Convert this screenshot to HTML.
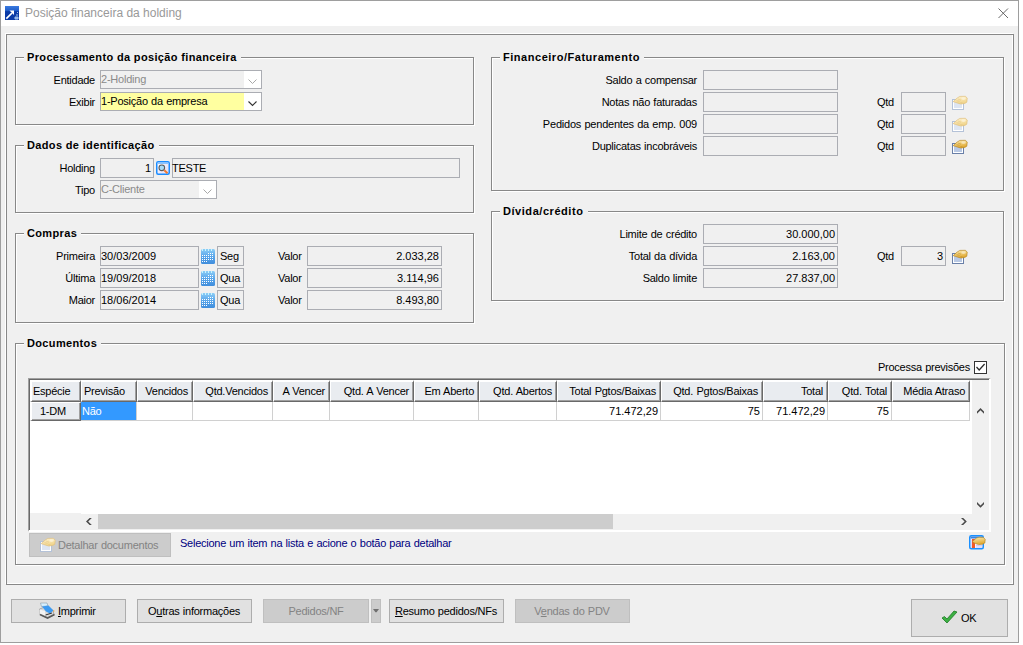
<!DOCTYPE html><html><head><meta charset="utf-8"><style>
html,body{margin:0;padding:0;background:#fff;width:1023px;height:645px;overflow:hidden}
body{position:relative;font-family:'Liberation Sans',sans-serif}
div{position:absolute;box-sizing:border-box}
.t{white-space:nowrap;line-height:13px;font-family:'Liberation Sans',sans-serif}
svg{position:absolute}
</style></head><body>
<div style="left:0px;top:0px;width:1019px;height:643px;border:1px solid #9e9e9e;background:#f0f0f0"></div>
<div style="left:1px;top:1px;width:1017px;height:25px;background:#fff"></div>
<svg style="left:5px;top:6px" width="14" height="14" viewBox="0 0 14 14"><defs><linearGradient id="ig" x1="0" y1="0" x2="0" y2="1"><stop offset="0" stop-color="#3b7be0"/><stop offset="0.35" stop-color="#1f5cc8"/><stop offset="0.4" stop-color="#0a3aa6"/><stop offset="1" stop-color="#0a3aa6"/></linearGradient></defs><rect width="14" height="14" fill="url(#ig)"/><path d="M1.3 12.7 L7 7" stroke="#fff" stroke-width="1.7"/><path d="M4.5 4.5 L9 4.5 L9 9 Z" fill="#fff"/><path d="M10 11h3v2h-3zM12 7l1 -1M11 9h2" stroke="#9fc0ee" stroke-width="1" fill="#7fa6e0"/></svg>
<div class="t" style="left:25px;top:7px;font-size:12px;color:#999">Posição financeira da holding</div>
<svg style="left:998px;top:8px" width="11" height="11" viewBox="0 0 11 11"><path d="M0.5 0.5 L10 10 M10 0.5 L0.5 10" stroke="#5a5a5a" stroke-width="0.9"/></svg>
<div style="left:5px;top:33px;width:1008px;height:551px;border:1px solid #fff"></div>
<div style="left:6px;top:34px;width:1008px;height:551px;border:1px solid #888"></div>
<div style="left:16px;top:58px;width:459px;height:68px;border:1px solid #fff"></div>
<div style="left:15px;top:57px;width:459px;height:68px;border:1px solid #888"></div>
<div style="left:24px;top:55px;width:217px;height:5px;background:#f0f0f0"></div>
<div class="t" style="left:27px;top:51px;font-size:11px;font-weight:bold;color:#000;letter-spacing:0.350px;word-spacing:0px;">Processamento da posição financeira</div>
<div class="t" style="right:928px;top:74px;font-size:11px;font-weight:normal;color:#000;letter-spacing:-0.250px;word-spacing:0.5px;">Entidade</div>
<div class="t" style="right:928px;top:96px;font-size:11px;font-weight:normal;color:#000;letter-spacing:-0.250px;word-spacing:0.5px;">Exibir</div>
<div style="left:100px;top:70px;width:162px;height:19px;border:1px solid #abadb3;background:#f0f0f0"></div>
<div style="left:244px;top:71px;width:17px;height:17px;background:#fff"></div>
<div class="t" style="left:101px;top:73px;font-size:11px;font-weight:normal;color:#8a8a8a;letter-spacing:-0.222px;word-spacing:0.5px;">2-Holding</div>
<svg style="left:248px;top:79px" width="9" height="6" viewBox="0 0 9 6"><path d="M0.5 0.5 L4.5 4.5 L8.5 0.5" stroke="#a8a8a8" fill="none"/></svg>
<div style="left:100px;top:92px;width:162px;height:19px;border:1px solid #abadb3;background:#ffffa0"></div>
<div style="left:244px;top:93px;width:17px;height:17px;background:#fff"></div>
<div class="t" style="left:101px;top:95px;font-size:11px;font-weight:normal;color:#000;letter-spacing:-0.237px;word-spacing:0.5px;">1-Posição da empresa</div>
<svg style="left:248px;top:101px" width="9" height="6" viewBox="0 0 9 6"><path d="M0.5 0.5 L4.5 4.5 L8.5 0.5" stroke="#333" stroke-width="1.1" fill="none"/></svg>
<div style="left:16px;top:146px;width:459px;height:68px;border:1px solid #fff"></div>
<div style="left:15px;top:145px;width:459px;height:68px;border:1px solid #888"></div>
<div style="left:24px;top:143px;width:135px;height:5px;background:#f0f0f0"></div>
<div class="t" style="left:27px;top:139px;font-size:11px;font-weight:bold;color:#000;letter-spacing:0.350px;word-spacing:0px;">Dados de identificação</div>
<div class="t" style="right:928px;top:162px;font-size:11px;font-weight:normal;color:#000;letter-spacing:-0.250px;word-spacing:0.5px;">Holding</div>
<div style="left:100px;top:158px;width:54px;height:20px;border:1px solid #abadb3;background:#f0f0f0"></div>
<div class="t" style="right:872px;top:162px;font-size:11px;font-weight:normal;color:#000;letter-spacing:0.000px;word-spacing:0.5px;">1</div>
<svg style="left:156px;top:161px" width="14" height="14" viewBox="0 0 14 14"><defs><linearGradient id="sg" x1="0" y1="0" x2="1" y2="1"><stop offset="0" stop-color="#ffffff"/><stop offset="1" stop-color="#dcd8f4"/></linearGradient></defs><rect x="0.75" y="0.75" width="12.5" height="12.5" rx="1.5" fill="url(#sg)" stroke="#1a8cff" stroke-width="1.5"/><rect x="1.5" y="1.5" width="11" height="1.5" fill="#8cc4ff"/><circle cx="5.8" cy="6.8" r="2.8" fill="#a8dcf8" stroke="#5a5a5a" stroke-width="1.1"/><path d="M8.3 9.3 L11.5 12.2" stroke="#f07a30" stroke-width="2"/></svg>
<div style="left:172px;top:158px;width:288px;height:20px;border:1px solid #abadb3;background:#f0f0f0"></div>
<div class="t" style="left:172px;top:162px;font-size:11px;font-weight:normal;color:#000;letter-spacing:-0.250px;word-spacing:0.5px;">TESTE</div>
<div class="t" style="right:928px;top:184px;font-size:11px;font-weight:normal;color:#000;letter-spacing:-0.250px;word-spacing:0.5px;">Tipo</div>
<div style="left:100px;top:180px;width:117px;height:19px;border:1px solid #abadb3;background:#f0f0f0"></div>
<div style="left:199px;top:181px;width:17px;height:17px;background:#fff"></div>
<div class="t" style="left:101px;top:183px;font-size:11px;font-weight:normal;color:#8a8a8a;letter-spacing:-0.250px;word-spacing:0.5px;">C-Cliente</div>
<svg style="left:203px;top:189px" width="9" height="6" viewBox="0 0 9 6"><path d="M0.5 0.5 L4.5 4.5 L8.5 0.5" stroke="#a8a8a8" fill="none"/></svg>
<div style="left:16px;top:234px;width:459px;height:90px;border:1px solid #fff"></div>
<div style="left:15px;top:233px;width:459px;height:90px;border:1px solid #888"></div>
<div style="left:24px;top:231px;width:57px;height:5px;background:#f0f0f0"></div>
<div class="t" style="left:27px;top:227px;font-size:11px;font-weight:bold;color:#000;letter-spacing:0.350px;word-spacing:0px;">Compras</div>
<div class="t" style="right:928px;top:250px;font-size:11px;font-weight:normal;color:#000;letter-spacing:-0.250px;word-spacing:0.5px;">Primeira</div>
<div style="left:100px;top:246px;width:99px;height:20px;border:1px solid #abadb3;background:#f0f0f0"></div>
<div class="t" style="left:101px;top:250px;font-size:11px;font-weight:normal;color:#000;letter-spacing:0.000px;word-spacing:0.5px;">30/03/2009</div>
<svg style="left:201px;top:249px" width="14" height="15" viewBox="0 0 14 15"><defs><linearGradient id="cg0" x1="0" y1="0" x2="0" y2="1"><stop offset="0" stop-color="#8ccdf6"/><stop offset="0.5" stop-color="#5aa6ea"/><stop offset="1" stop-color="#3f8ddc"/></linearGradient></defs><rect width="14" height="15" rx="1.5" fill="url(#cg0)"/><path d="M1 0h1v2h-1zM4 0h1v2h-1zM7 0h1v2h-1zM10 0h1v2h-1z" fill="#c8f4ff"/><path d="M1 6h1v1h-1zM3 6h1v1h-1zM5 6h1v1h-1zM7 6h1v1h-1zM9 6h1v1h-1zM11 6h1v1h-1zM1 8h1v1h-1zM3 8h1v1h-1zM5 8h1v1h-1zM7 8h1v1h-1zM9 8h1v1h-1zM11 8h1v1h-1zM1 10h1v1h-1zM3 10h1v1h-1zM5 10h1v1h-1zM7 10h1v1h-1zM9 10h1v1h-1zM11 10h1v1h-1zM7 4h1v1h-1zM9 4h1v1h-1zM11 4h1v1h-1zM1 12h1v1h-1zM3 12h1v1h-1zM5 12h1v1h-1z" fill="#fff"/></svg>
<div style="left:217px;top:246px;width:27px;height:20px;border:1px solid #abadb3;background:#f0f0f0"></div>
<div class="t" style="left:220px;top:250px;font-size:11px;font-weight:normal;color:#000;letter-spacing:-0.250px;word-spacing:0.5px;">Seg</div>
<div class="t" style="left:278px;top:250px;font-size:11px;font-weight:normal;color:#000;letter-spacing:-0.250px;word-spacing:0.5px;">Valor</div>
<div style="left:307px;top:246px;width:135px;height:20px;border:1px solid #abadb3;background:#f0f0f0"></div>
<div class="t" style="right:584px;top:250px;font-size:11px;font-weight:normal;color:#000;letter-spacing:0.000px;word-spacing:0.5px;">2.033,28</div>
<div class="t" style="right:928px;top:272px;font-size:11px;font-weight:normal;color:#000;letter-spacing:-0.250px;word-spacing:0.5px;">Última</div>
<div style="left:100px;top:268px;width:99px;height:20px;border:1px solid #abadb3;background:#f0f0f0"></div>
<div class="t" style="left:101px;top:272px;font-size:11px;font-weight:normal;color:#000;letter-spacing:0.000px;word-spacing:0.5px;">19/09/2018</div>
<svg style="left:201px;top:271px" width="14" height="15" viewBox="0 0 14 15"><defs><linearGradient id="cg1" x1="0" y1="0" x2="0" y2="1"><stop offset="0" stop-color="#8ccdf6"/><stop offset="0.5" stop-color="#5aa6ea"/><stop offset="1" stop-color="#3f8ddc"/></linearGradient></defs><rect width="14" height="15" rx="1.5" fill="url(#cg1)"/><path d="M1 0h1v2h-1zM4 0h1v2h-1zM7 0h1v2h-1zM10 0h1v2h-1z" fill="#c8f4ff"/><path d="M1 6h1v1h-1zM3 6h1v1h-1zM5 6h1v1h-1zM7 6h1v1h-1zM9 6h1v1h-1zM11 6h1v1h-1zM1 8h1v1h-1zM3 8h1v1h-1zM5 8h1v1h-1zM7 8h1v1h-1zM9 8h1v1h-1zM11 8h1v1h-1zM1 10h1v1h-1zM3 10h1v1h-1zM5 10h1v1h-1zM7 10h1v1h-1zM9 10h1v1h-1zM11 10h1v1h-1zM7 4h1v1h-1zM9 4h1v1h-1zM11 4h1v1h-1zM1 12h1v1h-1zM3 12h1v1h-1zM5 12h1v1h-1z" fill="#fff"/></svg>
<div style="left:217px;top:268px;width:27px;height:20px;border:1px solid #abadb3;background:#f0f0f0"></div>
<div class="t" style="left:220px;top:272px;font-size:11px;font-weight:normal;color:#000;letter-spacing:-0.250px;word-spacing:0.5px;">Qua</div>
<div class="t" style="left:278px;top:272px;font-size:11px;font-weight:normal;color:#000;letter-spacing:-0.250px;word-spacing:0.5px;">Valor</div>
<div style="left:307px;top:268px;width:135px;height:20px;border:1px solid #abadb3;background:#f0f0f0"></div>
<div class="t" style="right:584px;top:272px;font-size:11px;font-weight:normal;color:#000;letter-spacing:0.000px;word-spacing:0.5px;">3.114,96</div>
<div class="t" style="right:928px;top:294px;font-size:11px;font-weight:normal;color:#000;letter-spacing:-0.250px;word-spacing:0.5px;">Maior</div>
<div style="left:100px;top:290px;width:99px;height:20px;border:1px solid #abadb3;background:#f0f0f0"></div>
<div class="t" style="left:101px;top:294px;font-size:11px;font-weight:normal;color:#000;letter-spacing:0.000px;word-spacing:0.5px;">18/06/2014</div>
<svg style="left:201px;top:293px" width="14" height="15" viewBox="0 0 14 15"><defs><linearGradient id="cg2" x1="0" y1="0" x2="0" y2="1"><stop offset="0" stop-color="#8ccdf6"/><stop offset="0.5" stop-color="#5aa6ea"/><stop offset="1" stop-color="#3f8ddc"/></linearGradient></defs><rect width="14" height="15" rx="1.5" fill="url(#cg2)"/><path d="M1 0h1v2h-1zM4 0h1v2h-1zM7 0h1v2h-1zM10 0h1v2h-1z" fill="#c8f4ff"/><path d="M1 6h1v1h-1zM3 6h1v1h-1zM5 6h1v1h-1zM7 6h1v1h-1zM9 6h1v1h-1zM11 6h1v1h-1zM1 8h1v1h-1zM3 8h1v1h-1zM5 8h1v1h-1zM7 8h1v1h-1zM9 8h1v1h-1zM11 8h1v1h-1zM1 10h1v1h-1zM3 10h1v1h-1zM5 10h1v1h-1zM7 10h1v1h-1zM9 10h1v1h-1zM11 10h1v1h-1zM7 4h1v1h-1zM9 4h1v1h-1zM11 4h1v1h-1zM1 12h1v1h-1zM3 12h1v1h-1zM5 12h1v1h-1z" fill="#fff"/></svg>
<div style="left:217px;top:290px;width:27px;height:20px;border:1px solid #abadb3;background:#f0f0f0"></div>
<div class="t" style="left:220px;top:294px;font-size:11px;font-weight:normal;color:#000;letter-spacing:-0.250px;word-spacing:0.5px;">Qua</div>
<div class="t" style="left:278px;top:294px;font-size:11px;font-weight:normal;color:#000;letter-spacing:-0.250px;word-spacing:0.5px;">Valor</div>
<div style="left:307px;top:290px;width:135px;height:20px;border:1px solid #abadb3;background:#f0f0f0"></div>
<div class="t" style="right:584px;top:294px;font-size:11px;font-weight:normal;color:#000;letter-spacing:0.000px;word-spacing:0.5px;">8.493,80</div>
<div style="left:492px;top:58px;width:513px;height:134px;border:1px solid #fff"></div>
<div style="left:491px;top:57px;width:513px;height:134px;border:1px solid #888"></div>
<div style="left:500px;top:55px;width:144px;height:5px;background:#f0f0f0"></div>
<div class="t" style="left:503px;top:51px;font-size:11px;font-weight:bold;color:#000;letter-spacing:0.530px;word-spacing:0px;">Financeiro/Faturamento</div>
<div class="t" style="right:326px;top:74px;font-size:11px;font-weight:normal;color:#000;letter-spacing:-0.250px;word-spacing:0.5px;">Saldo a compensar</div>
<div style="left:703px;top:70px;width:135px;height:20px;border:1px solid #abadb3;background:#f0f0f0"></div>
<div class="t" style="right:326px;top:96px;font-size:11px;font-weight:normal;color:#000;letter-spacing:-0.250px;word-spacing:0.5px;">Notas não faturadas</div>
<div style="left:703px;top:92px;width:135px;height:20px;border:1px solid #abadb3;background:#f0f0f0"></div>
<div class="t" style="left:877px;top:96px;font-size:11px;font-weight:normal;color:#000;letter-spacing:-0.250px;word-spacing:0.5px;">Qtd</div>
<div style="left:901px;top:92px;width:45px;height:20px;border:1px solid #abadb3;background:#f0f0f0"></div>
<svg style="left:952px;top:95px" width="17" height="16" viewBox="0 0 17 16"><defs><linearGradient id="hg1" x1="0" y1="0" x2="0.3" y2="1"><stop offset="0" stop-color="#fff3d0"/><stop offset="1" stop-color="#f0d48a"/></linearGradient></defs><rect x="0.5" y="4.5" width="11" height="10" fill="#dde5f2" stroke="#b4c2d8"/><rect x="1.5" y="5.5" width="9" height="8" fill="none" stroke="#fff" stroke-width="1"/><path d="M1.2 6.6 L5 3.2 L7.8 1.4 L13.5 1.3 L15.2 3.2 L14.8 7.2 L12.8 8.4 L8.8 9 L6 8.2 L3.2 7.3 Z" fill="url(#hg1)" stroke="#e0c080" stroke-width="0.7"/><path d="M4.5 5.6 L7.5 6.4 M6.2 4.2 L9 5.2 M8.5 7.5 L10.5 8" stroke="#e0c080" stroke-width="0.6" opacity="0.8"/><ellipse cx="11.5" cy="3.6" rx="2.2" ry="1.3" fill="#fff" opacity="0.45"/></svg>
<div class="t" style="right:326px;top:118px;font-size:11px;font-weight:normal;color:#000;letter-spacing:-0.216px;word-spacing:0.5px;">Pedidos pendentes da emp. 009</div>
<div style="left:703px;top:114px;width:135px;height:20px;border:1px solid #abadb3;background:#f0f0f0"></div>
<div class="t" style="left:877px;top:118px;font-size:11px;font-weight:normal;color:#000;letter-spacing:-0.250px;word-spacing:0.5px;">Qtd</div>
<div style="left:901px;top:114px;width:45px;height:20px;border:1px solid #abadb3;background:#f0f0f0"></div>
<svg style="left:952px;top:117px" width="17" height="16" viewBox="0 0 17 16"><defs><linearGradient id="hg2" x1="0" y1="0" x2="0.3" y2="1"><stop offset="0" stop-color="#fff3d0"/><stop offset="1" stop-color="#f0d48a"/></linearGradient></defs><rect x="0.5" y="4.5" width="11" height="10" fill="#dde5f2" stroke="#b4c2d8"/><rect x="1.5" y="5.5" width="9" height="8" fill="none" stroke="#fff" stroke-width="1"/><path d="M1.2 6.6 L5 3.2 L7.8 1.4 L13.5 1.3 L15.2 3.2 L14.8 7.2 L12.8 8.4 L8.8 9 L6 8.2 L3.2 7.3 Z" fill="url(#hg2)" stroke="#e0c080" stroke-width="0.7"/><path d="M4.5 5.6 L7.5 6.4 M6.2 4.2 L9 5.2 M8.5 7.5 L10.5 8" stroke="#e0c080" stroke-width="0.6" opacity="0.8"/><ellipse cx="11.5" cy="3.6" rx="2.2" ry="1.3" fill="#fff" opacity="0.45"/></svg>
<div class="t" style="right:326px;top:140px;font-size:11px;font-weight:normal;color:#000;letter-spacing:-0.250px;word-spacing:0.5px;">Duplicatas incobráveis</div>
<div style="left:703px;top:136px;width:135px;height:20px;border:1px solid #abadb3;background:#f0f0f0"></div>
<div class="t" style="left:877px;top:140px;font-size:11px;font-weight:normal;color:#000;letter-spacing:-0.250px;word-spacing:0.5px;">Qtd</div>
<div style="left:901px;top:136px;width:45px;height:20px;border:1px solid #abadb3;background:#f0f0f0"></div>
<svg style="left:952px;top:139px" width="17" height="16" viewBox="0 0 17 16"><defs><linearGradient id="hg3" x1="0" y1="0" x2="0.3" y2="1"><stop offset="0" stop-color="#fff0b8"/><stop offset="1" stop-color="#e0a830"/></linearGradient></defs><rect x="0.5" y="4.5" width="11" height="10" fill="#b9c9e4" stroke="#6a80a8"/><rect x="1.5" y="5.5" width="9" height="8" fill="none" stroke="#fff" stroke-width="1"/><path d="M1.2 6.6 L5 3.2 L7.8 1.4 L13.5 1.3 L15.2 3.2 L14.8 7.2 L12.8 8.4 L8.8 9 L6 8.2 L3.2 7.3 Z" fill="url(#hg3)" stroke="#b88a2a" stroke-width="0.7"/><path d="M4.5 5.6 L7.5 6.4 M6.2 4.2 L9 5.2 M8.5 7.5 L10.5 8" stroke="#b88a2a" stroke-width="0.6" opacity="0.8"/><ellipse cx="11.5" cy="3.6" rx="2.2" ry="1.3" fill="#fff" opacity="0.45"/></svg>
<div style="left:492px;top:212px;width:513px;height:90px;border:1px solid #fff"></div>
<div style="left:491px;top:211px;width:513px;height:90px;border:1px solid #888"></div>
<div style="left:500px;top:209px;width:88px;height:5px;background:#f0f0f0"></div>
<div class="t" style="left:503px;top:205px;font-size:11px;font-weight:bold;color:#000;letter-spacing:0.550px;word-spacing:0px;">Dívida/crédito</div>
<div class="t" style="right:326px;top:228px;font-size:11px;font-weight:normal;color:#000;letter-spacing:-0.250px;word-spacing:0.5px;">Limite de crédito</div>
<div style="left:703px;top:224px;width:135px;height:20px;border:1px solid #abadb3;background:#f0f0f0"></div>
<div class="t" style="right:188px;top:228px;font-size:11px;font-weight:normal;color:#000;letter-spacing:0.000px;word-spacing:0.5px;">30.000,00</div>
<div class="t" style="right:326px;top:250px;font-size:11px;font-weight:normal;color:#000;letter-spacing:-0.250px;word-spacing:0.5px;">Total da dívida</div>
<div style="left:703px;top:246px;width:135px;height:20px;border:1px solid #abadb3;background:#f0f0f0"></div>
<div class="t" style="right:188px;top:250px;font-size:11px;font-weight:normal;color:#000;letter-spacing:0.000px;word-spacing:0.5px;">2.163,00</div>
<div class="t" style="right:326px;top:272px;font-size:11px;font-weight:normal;color:#000;letter-spacing:-0.250px;word-spacing:0.5px;">Saldo limite</div>
<div style="left:703px;top:268px;width:135px;height:20px;border:1px solid #abadb3;background:#f0f0f0"></div>
<div class="t" style="right:188px;top:272px;font-size:11px;font-weight:normal;color:#000;letter-spacing:0.000px;word-spacing:0.5px;">27.837,00</div>
<div class="t" style="left:877px;top:250px;font-size:11px;font-weight:normal;color:#000;letter-spacing:-0.250px;word-spacing:0.5px;">Qtd</div>
<div style="left:901px;top:246px;width:45px;height:20px;border:1px solid #abadb3;background:#f0f0f0"></div>
<div class="t" style="right:80px;top:250px;font-size:11px;font-weight:normal;color:#000;letter-spacing:0.000px;word-spacing:0.5px;">3</div>
<svg style="left:952px;top:249px" width="17" height="16" viewBox="0 0 17 16"><defs><linearGradient id="hg4" x1="0" y1="0" x2="0.3" y2="1"><stop offset="0" stop-color="#fff0b8"/><stop offset="1" stop-color="#e0a830"/></linearGradient></defs><rect x="0.5" y="4.5" width="11" height="10" fill="#b9c9e4" stroke="#6a80a8"/><rect x="1.5" y="5.5" width="9" height="8" fill="none" stroke="#fff" stroke-width="1"/><path d="M1.2 6.6 L5 3.2 L7.8 1.4 L13.5 1.3 L15.2 3.2 L14.8 7.2 L12.8 8.4 L8.8 9 L6 8.2 L3.2 7.3 Z" fill="url(#hg4)" stroke="#b88a2a" stroke-width="0.7"/><path d="M4.5 5.6 L7.5 6.4 M6.2 4.2 L9 5.2 M8.5 7.5 L10.5 8" stroke="#b88a2a" stroke-width="0.6" opacity="0.8"/><ellipse cx="11.5" cy="3.6" rx="2.2" ry="1.3" fill="#fff" opacity="0.45"/></svg>
<div style="left:16px;top:344px;width:990px;height:222px;border:1px solid #fff"></div>
<div style="left:15px;top:343px;width:990px;height:222px;border:1px solid #888"></div>
<div style="left:24px;top:341px;width:77px;height:5px;background:#f0f0f0"></div>
<div class="t" style="left:27px;top:337px;font-size:11px;font-weight:bold;color:#000;letter-spacing:0.350px;word-spacing:0px;">Documentos</div>
<div class="t" style="right:53px;top:361px;font-size:11px;font-weight:normal;color:#000;letter-spacing:-0.250px;word-spacing:0.5px;">Processa previsões</div>
<div style="left:974px;top:361px;width:13px;height:13px;border:1px solid #333;background:#fff"></div>
<svg style="left:975px;top:362px" width="11" height="11" viewBox="0 0 11 11"><path d="M1.5 5 L4.2 8 L9.6 2" stroke="#2a2a2a" stroke-width="1.25" fill="none"/></svg>
<div style="left:28px;top:378px;width:963px;height:154px;border-top:1px solid #a0a0a0;border-left:1px solid #a0a0a0;border-right:2px solid #fff;border-bottom:2px solid #fff;background:#fff;box-shadow:inset 1px 1px 0 #696969"></div>
<div style="left:30px;top:380px;width:51px;height:22px;background:#e9ecf0;border-top:2px solid #fff;border-left:2px solid #fff;border-right:1px solid #696969;border-bottom:1px solid #696969;box-shadow:inset -1px -1px 0 #a0a0a0"></div>
<div class="t" style="left:33px;top:385px;font-size:11px;font-weight:normal;color:#000;letter-spacing:-0.250px;word-spacing:0.5px;">Espécie</div>
<div style="left:81px;top:380px;width:56px;height:22px;background:#e9ecf0;border-top:2px solid #fff;border-left:1px solid #fff;border-right:1px solid #696969;border-bottom:1px solid #696969;box-shadow:inset -1px -1px 0 #a0a0a0"></div>
<div class="t" style="left:84px;top:385px;font-size:11px;font-weight:normal;color:#000;letter-spacing:-0.250px;word-spacing:0.5px;">Previsão</div>
<div style="left:137px;top:380px;width:56px;height:22px;background:#e9ecf0;border-top:2px solid #fff;border-left:1px solid #fff;border-right:1px solid #696969;border-bottom:1px solid #696969;box-shadow:inset -1px -1px 0 #a0a0a0"></div>
<div class="t" style="right:835px;top:385px;font-size:11px;font-weight:normal;color:#000;letter-spacing:-0.250px;word-spacing:0.5px;">Vencidos</div>
<div style="left:193px;top:380px;width:80px;height:22px;background:#e9ecf0;border-top:2px solid #fff;border-left:1px solid #fff;border-right:1px solid #696969;border-bottom:1px solid #696969;box-shadow:inset -1px -1px 0 #a0a0a0"></div>
<div class="t" style="right:755px;top:385px;font-size:11px;font-weight:normal;color:#000;letter-spacing:-0.229px;word-spacing:0.5px;">Qtd.Vencidos</div>
<div style="left:273px;top:380px;width:57px;height:22px;background:#e9ecf0;border-top:2px solid #fff;border-left:1px solid #fff;border-right:1px solid #696969;border-bottom:1px solid #696969;box-shadow:inset -1px -1px 0 #a0a0a0"></div>
<div class="t" style="right:698px;top:385px;font-size:11px;font-weight:normal;color:#000;letter-spacing:-0.250px;word-spacing:0.5px;">A Vencer</div>
<div style="left:330px;top:380px;width:84px;height:22px;background:#e9ecf0;border-top:2px solid #fff;border-left:1px solid #fff;border-right:1px solid #696969;border-bottom:1px solid #696969;box-shadow:inset -1px -1px 0 #a0a0a0"></div>
<div class="t" style="right:614px;top:385px;font-size:11px;font-weight:normal;color:#000;letter-spacing:-0.231px;word-spacing:0.5px;">Qtd. A Vencer</div>
<div style="left:414px;top:380px;width:65px;height:22px;background:#e9ecf0;border-top:2px solid #fff;border-left:1px solid #fff;border-right:1px solid #696969;border-bottom:1px solid #696969;box-shadow:inset -1px -1px 0 #a0a0a0"></div>
<div class="t" style="right:549px;top:385px;font-size:11px;font-weight:normal;color:#000;letter-spacing:-0.250px;word-spacing:0.5px;">Em Aberto</div>
<div style="left:479px;top:380px;width:78px;height:22px;background:#e9ecf0;border-top:2px solid #fff;border-left:1px solid #fff;border-right:1px solid #696969;border-bottom:1px solid #696969;box-shadow:inset -1px -1px 0 #a0a0a0"></div>
<div class="t" style="right:471px;top:385px;font-size:11px;font-weight:normal;color:#000;letter-spacing:-0.229px;word-spacing:0.5px;">Qtd. Abertos</div>
<div style="left:557px;top:380px;width:104px;height:22px;background:#e9ecf0;border-top:2px solid #fff;border-left:1px solid #fff;border-right:1px solid #696969;border-bottom:1px solid #696969;box-shadow:inset -1px -1px 0 #a0a0a0"></div>
<div class="t" style="right:367px;top:385px;font-size:11px;font-weight:normal;color:#000;letter-spacing:-0.236px;word-spacing:0.5px;">Total Pgtos/Baixas</div>
<div style="left:661px;top:380px;width:102px;height:22px;background:#e9ecf0;border-top:2px solid #fff;border-left:1px solid #fff;border-right:1px solid #696969;border-bottom:1px solid #696969;box-shadow:inset -1px -1px 0 #a0a0a0"></div>
<div class="t" style="right:265px;top:385px;font-size:11px;font-weight:normal;color:#000;letter-spacing:-0.221px;word-spacing:0.5px;">Qtd. Pgtos/Baixas</div>
<div style="left:763px;top:380px;width:65px;height:22px;background:#e9ecf0;border-top:2px solid #fff;border-left:1px solid #fff;border-right:1px solid #696969;border-bottom:1px solid #696969;box-shadow:inset -1px -1px 0 #a0a0a0"></div>
<div class="t" style="right:200px;top:385px;font-size:11px;font-weight:normal;color:#000;letter-spacing:-0.250px;word-spacing:0.5px;">Total</div>
<div style="left:828px;top:380px;width:64px;height:22px;background:#e9ecf0;border-top:2px solid #fff;border-left:1px solid #fff;border-right:1px solid #696969;border-bottom:1px solid #696969;box-shadow:inset -1px -1px 0 #a0a0a0"></div>
<div class="t" style="right:136px;top:385px;font-size:11px;font-weight:normal;color:#000;letter-spacing:-0.225px;word-spacing:0.5px;">Qtd. Total</div>
<div style="left:892px;top:380px;width:78px;height:22px;background:#e9ecf0;border-top:2px solid #fff;border-left:1px solid #fff;border-right:1px solid #696969;border-bottom:1px solid #696969;box-shadow:inset -1px -1px 0 #a0a0a0"></div>
<div class="t" style="right:58px;top:385px;font-size:11px;font-weight:normal;color:#000;letter-spacing:-0.250px;word-spacing:0.5px;">Média Atraso</div>
<div style="left:30px;top:402px;width:51px;height:19px;background:#e9ecf0;border-top:1px solid #fff;border-left:2px solid #fff;border-right:1px solid #696969;border-bottom:1px solid #696969;box-shadow:inset -1px -1px 0 #a0a0a0"></div>
<div class="t" style="left:-97px;width:300px;text-align:center;top:405px;font-size:11px;font-weight:normal;color:#000;letter-spacing:-0.188px;word-spacing:0.5px;">1-DM</div>
<div style="left:81px;top:402px;width:55px;height:18px;background:#3399ff"></div>
<div style="left:136px;top:402px;width:1px;height:19px;background:#d0d0d0"></div>
<div style="left:81px;top:420px;width:56px;height:1px;background:#d0d0d0"></div>
<div class="t" style="left:82px;top:405px;font-size:11px;font-weight:normal;color:#fff;letter-spacing:-0.250px;word-spacing:0.5px;">Não</div>
<div style="left:137px;top:402px;width:56px;height:19px;border-right:1px solid #d0d0d0;border-bottom:1px solid #d0d0d0"></div>
<div style="left:193px;top:402px;width:80px;height:19px;border-right:1px solid #d0d0d0;border-bottom:1px solid #d0d0d0"></div>
<div style="left:273px;top:402px;width:57px;height:19px;border-right:1px solid #d0d0d0;border-bottom:1px solid #d0d0d0"></div>
<div style="left:330px;top:402px;width:84px;height:19px;border-right:1px solid #d0d0d0;border-bottom:1px solid #d0d0d0"></div>
<div style="left:414px;top:402px;width:65px;height:19px;border-right:1px solid #d0d0d0;border-bottom:1px solid #d0d0d0"></div>
<div style="left:479px;top:402px;width:78px;height:19px;border-right:1px solid #d0d0d0;border-bottom:1px solid #d0d0d0"></div>
<div style="left:557px;top:402px;width:104px;height:19px;border-right:1px solid #d0d0d0;border-bottom:1px solid #d0d0d0"></div>
<div style="left:661px;top:402px;width:102px;height:19px;border-right:1px solid #d0d0d0;border-bottom:1px solid #d0d0d0"></div>
<div style="left:763px;top:402px;width:65px;height:19px;border-right:1px solid #d0d0d0;border-bottom:1px solid #d0d0d0"></div>
<div style="left:828px;top:402px;width:64px;height:19px;border-right:1px solid #d0d0d0;border-bottom:1px solid #d0d0d0"></div>
<div style="left:892px;top:402px;width:78px;height:19px;border-right:1px solid #d0d0d0;border-bottom:1px solid #d0d0d0"></div>
<div class="t" style="right:365px;top:405px;font-size:11px;font-weight:normal;color:#000;letter-spacing:0.000px;word-spacing:0.5px;">71.472,29</div>
<div class="t" style="right:263px;top:405px;font-size:11px;font-weight:normal;color:#000;letter-spacing:0.000px;word-spacing:0.5px;">75</div>
<div class="t" style="right:198px;top:405px;font-size:11px;font-weight:normal;color:#000;letter-spacing:0.000px;word-spacing:0.5px;">71.472,29</div>
<div class="t" style="right:134px;top:405px;font-size:11px;font-weight:normal;color:#000;letter-spacing:0.000px;word-spacing:0.5px;">75</div>
<div style="left:972px;top:380px;width:17px;height:134px;background:#f0f0f0"></div>
<svg style="left:977px;top:407px" width="8" height="8" viewBox="0 0 8 8"><path d="M0 4.6 L3.5 1 L7 4.6 L7 6.8 L3.5 3.2 L0 6.8 Z" fill="#4a4a4a"/></svg>
<svg style="left:977px;top:502px" width="8" height="8" viewBox="0 0 8 8"><path d="M0 0 L3.5 3.6 L7 0 L7 2.2 L3.5 5.8 L0 2.2 Z" fill="#4a4a4a"/></svg>
<div style="left:30px;top:514px;width:959px;height:16px;background:#f0f0f0"></div>
<div style="left:30px;top:513px;width:51px;height:1px;background:#f0f0f0"></div>
<div style="left:98px;top:514px;width:515px;height:15px;background:#cdcdcd"></div>
<svg style="left:85px;top:518px" width="8" height="8" viewBox="0 0 8 8"><path d="M4.6 0 L1 3.5 L4.6 7 L6.8 7 L3.2 3.5 L6.8 0 Z" fill="#4a4a4a"/></svg>
<svg style="left:960px;top:518px" width="8" height="8" viewBox="0 0 8 8"><path d="M1 0 L4.6 3.5 L1 7 L3.2 7 L6.8 3.5 L3.2 0 Z" fill="#4a4a4a"/></svg>
<div style="left:29px;top:533px;width:142px;height:24px;background:#cccccc;border:1px solid #bfbfbf"></div>
<svg style="left:40px;top:537px" width="17" height="16" viewBox="0 0 17 16"><defs><linearGradient id="hg5" x1="0" y1="0" x2="0.3" y2="1"><stop offset="0" stop-color="#fff3d0"/><stop offset="1" stop-color="#f0d48a"/></linearGradient></defs><rect x="0.5" y="4.5" width="11" height="10" fill="#dde5f2" stroke="#b4c2d8"/><rect x="1.5" y="5.5" width="9" height="8" fill="none" stroke="#fff" stroke-width="1"/><path d="M1.2 6.6 L5 3.2 L7.8 1.4 L13.5 1.3 L15.2 3.2 L14.8 7.2 L12.8 8.4 L8.8 9 L6 8.2 L3.2 7.3 Z" fill="url(#hg5)" stroke="#e0c080" stroke-width="0.7"/><path d="M4.5 5.6 L7.5 6.4 M6.2 4.2 L9 5.2 M8.5 7.5 L10.5 8" stroke="#e0c080" stroke-width="0.6" opacity="0.8"/><ellipse cx="11.5" cy="3.6" rx="2.2" ry="1.3" fill="#fff" opacity="0.45"/></svg>
<div class="t" style="left:58px;top:539px;font-size:11px;font-weight:normal;color:#838383;letter-spacing:-0.250px;word-spacing:0.5px;">Detalhar documentos</div>
<div class="t" style="left:180px;top:537px;font-size:11px;font-weight:normal;color:#000080;letter-spacing:-0.250px;word-spacing:0.5px;">Selecione um item na lista e acione o botão para detalhar</div>
<svg style="left:969px;top:535px" width="17" height="15" viewBox="0 0 17 15"><defs><linearGradient id="gg" x1="0" y1="0" x2="0.3" y2="1"><stop offset="0" stop-color="#fff0b8"/><stop offset="1" stop-color="#e0a830"/></linearGradient></defs><rect x="0.75" y="0.75" width="13.5" height="13" rx="1.5" fill="#f4f0ff" stroke="#1a90ff" stroke-width="1.5"/><rect x="1.5" y="1.5" width="12" height="2" fill="#3a86e0"/><rect x="3" y="4" width="3" height="9" fill="#f05a28"/><path d="M7 10.5h6M7 12h6M2 6h1M2 8h1M2 10h1M2 12h1" stroke="#c8c0ee" stroke-width="0.8"/><path d="M3.5 6.5 L7.5 3 L10 2.2 L14.5 2.4 L16.2 4.5 L15.8 8 L13.5 9.2 L9.5 9.6 L6.5 8.5 L4.5 7.6 Z" fill="url(#gg)" stroke="#b88a2a" stroke-width="0.7"/></svg>
<div style="left:11px;top:599px;width:115px;height:24px;background:#e1e1e1;border:1px solid #adadad"></div>
<div class="t" style="left:58px;top:605px;font-size:11px;font-weight:normal;color:#000;letter-spacing:-0.250px;word-spacing:0.5px;"><u>I</u>mprimir</div>
<svg style="left:38px;top:602px" width="18" height="17" viewBox="0 0 18 17"><path d="M1.5 7 L7 5 L15 8.5 L16 13 L10 16 L1.5 12.5 Z" fill="#d8d8d8" stroke="#9a9a9a" stroke-width="0.8"/><path d="M1.5 7.5 L7 9 L7.5 14.5 L1.5 12.5 Z" fill="#f4f4f4"/><path d="M2.5 1 L9 1 L10 4 L3.5 4.5 Z" fill="#d6f0ff" stroke="#8a9aa8" stroke-width="0.6"/><path d="M4 4.5 L10.5 3.5 L15.5 8.5 L12 11.5 L8 9.5 Z" fill="#3d9af0"/><path d="M16 9.5 L15.5 8.5" stroke="#f0a030" stroke-width="1.2"/><path d="M2 12.5 L9.5 16 L16.5 12.5" stroke="#5a5a5a" stroke-width="1.6" fill="none"/><path d="M7.5 13 L14 11" stroke="#333" stroke-width="1"/></svg>
<div style="left:137px;top:599px;width:115px;height:24px;background:#e1e1e1;border:1px solid #adadad"></div>
<div class="t" style="left:44px;width:300px;text-align:center;top:605px;font-size:11px;font-weight:normal;color:#000;letter-spacing:-0.250px;word-spacing:0.5px;">O<u>u</u>tras informações</div>
<div style="left:263px;top:599px;width:106px;height:24px;background:#cccccc;border:1px solid #bfbfbf"></div>
<div class="t" style="left:166px;width:300px;text-align:center;top:605px;font-size:11px;font-weight:normal;color:#838383;letter-spacing:-0.225px;word-spacing:0.5px;">Pedidos/NF</div>
<div style="left:371px;top:599px;width:10px;height:24px;background:#cccccc;border:1px solid #bfbfbf"></div>
<svg style="left:373px;top:609px" width="6" height="4" viewBox="0 0 6 4"><path d="M0 0 L6 0 L3.6 3.2 L2.4 3.2 Z" fill="#707070"/></svg>
<div style="left:389px;top:599px;width:115px;height:24px;background:#e1e1e1;border:1px solid #adadad"></div>
<div class="t" style="left:296px;width:300px;text-align:center;top:605px;font-size:11px;font-weight:normal;color:#000;letter-spacing:-0.236px;word-spacing:0.5px;"><u>R</u>esumo pedidos/NFs</div>
<div style="left:515px;top:599px;width:115px;height:24px;background:#cccccc;border:1px solid #bfbfbf"></div>
<div class="t" style="left:422px;width:300px;text-align:center;top:605px;font-size:11px;font-weight:normal;color:#838383;letter-spacing:-0.250px;word-spacing:0.5px;">V<u>e</u>ndas do PDV</div>
<div style="left:911px;top:599px;width:97px;height:38px;background:#e1e1e1;border:1px solid #adadad"></div>
<svg style="left:941px;top:610px" width="17" height="15" viewBox="0 0 17 15"><path d="M1 8 L6 13 L16 2 L13 1 L6 9 L3.5 6.5 Z" fill="#3cb043" stroke="#1e7a24" stroke-width="0.8"/></svg>
<div class="t" style="left:961px;top:612px;font-size:11px;font-weight:normal;color:#000;letter-spacing:-0.250px;word-spacing:0.5px;">OK</div>
</body></html>
